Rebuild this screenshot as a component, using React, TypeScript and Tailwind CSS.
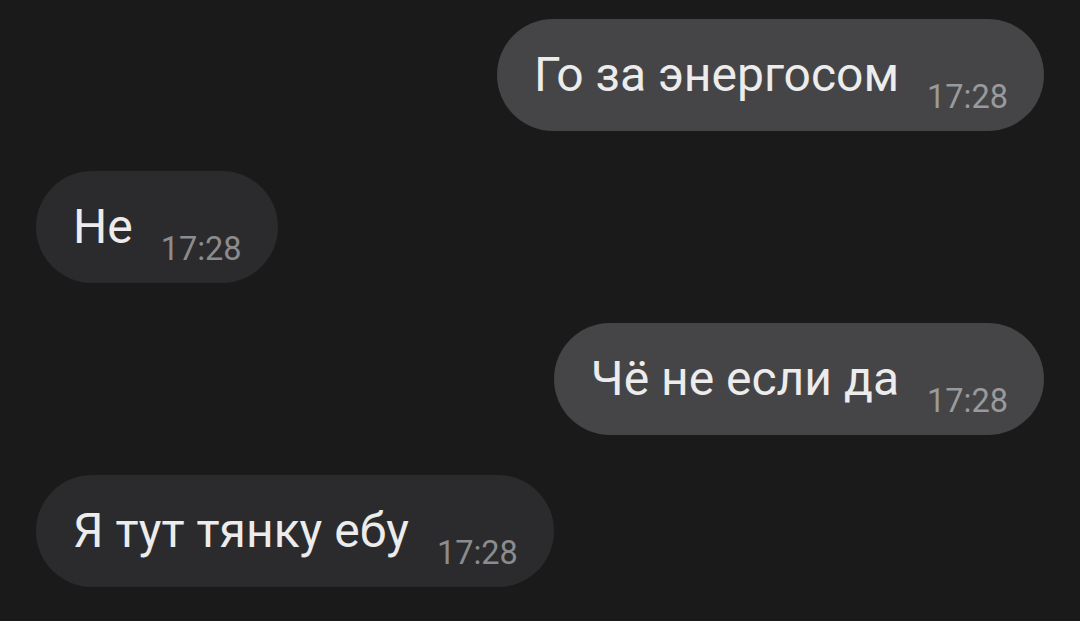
const messages = [
  { text: "Го за энергосом", time: "17:28", out: true },
  { text: "Не", time: "17:28", out: false },
  { text: "Чё не если да", time: "17:28", out: true },
  { text: "Я тут тянку ебу", time: "17:28", out: false },
];

function Bubble({ text, time, out }: { text: string; time: string; out: boolean }) {
  return (
    <div className={out ? "flex justify-end" : "flex justify-start"}>
      <div
        className={
          "h-[112px] rounded-full pl-[37px] pr-[36px] flex items-center " +
          (out ? "bg-[#454547]" : "bg-[#2b2b2d]")
        }
      >
        <div className="flex items-baseline gap-[28px]">
          <span className="text-[48px] leading-none text-[#ececec]">{text}</span>
          <span
            className={
              "text-[32.5px] leading-none translate-y-[17px] " +
              (out ? "text-[#9a9a9c]" : "text-[#8c8c8e]")
            }
          >
            {time}
          </span>
        </div>
      </div>
    </div>
  );
}

export default function App() {
  return (
    <div
      className="w-[1080px] h-[621px] bg-[#1a1a1a] px-[36px] pt-[19px] flex flex-col gap-[40px] overflow-hidden"
      style={{ fontFamily: "Roboto, 'Noto Sans', sans-serif" }}
    >
      {messages.map((m, i) => (
        <Bubble key={i} {...m} />
      ))}
    </div>
  );
}
